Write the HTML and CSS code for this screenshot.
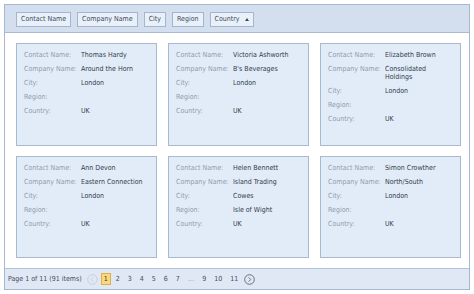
FILE: index.html
```html
<!DOCTYPE html>
<html>
<head>
<meta charset="utf-8">
<link rel="stylesheet" href="styles.css">
</head>
<body>
<div class="view">
  <div class="header">
    <span class="hbtn">Contact Name</span>
    <span class="hbtn">Company Name</span>
    <span class="hbtn">City</span>
    <span class="hbtn">Region</span>
    <span class="hbtn">Country <span class="sort"></span></span>
  </div>
  <div class="content">
    <div class="card">
      <span class="lbl">Contact Name:</span><span class="val">Thomas Hardy</span>
      <span class="lbl">Company Name:</span><span class="val">Around the Horn</span>
      <span class="lbl">City:</span><span class="val">London</span>
      <span class="lbl">Region:</span><span class="val"></span>
      <span class="lbl">Country:</span><span class="val">UK</span>
    </div>
    <div class="card">
      <span class="lbl">Contact Name:</span><span class="val">Victoria Ashworth</span>
      <span class="lbl">Company Name:</span><span class="val">B's Beverages</span>
      <span class="lbl">City:</span><span class="val">London</span>
      <span class="lbl">Region:</span><span class="val"></span>
      <span class="lbl">Country:</span><span class="val">UK</span>
    </div>
    <div class="card">
      <span class="lbl">Contact Name:</span><span class="val">Elizabeth Brown</span>
      <span class="lbl">Company Name:</span><span class="val">Consolidated Holdings</span>
      <span class="lbl">City:</span><span class="val">London</span>
      <span class="lbl">Region:</span><span class="val"></span>
      <span class="lbl">Country:</span><span class="val">UK</span>
    </div>
    <div class="card">
      <span class="lbl">Contact Name:</span><span class="val">Ann Devon</span>
      <span class="lbl">Company Name:</span><span class="val">Eastern Connection</span>
      <span class="lbl">City:</span><span class="val">London</span>
      <span class="lbl">Region:</span><span class="val"></span>
      <span class="lbl">Country:</span><span class="val">UK</span>
    </div>
    <div class="card">
      <span class="lbl">Contact Name:</span><span class="val">Helen Bennett</span>
      <span class="lbl">Company Name:</span><span class="val">Island Trading</span>
      <span class="lbl">City:</span><span class="val">Cowes</span>
      <span class="lbl">Region:</span><span class="val">Isle of Wight</span>
      <span class="lbl">Country:</span><span class="val">UK</span>
    </div>
    <div class="card">
      <span class="lbl">Contact Name:</span><span class="val">Simon Crowther</span>
      <span class="lbl">Company Name:</span><span class="val">North/South</span>
      <span class="lbl">City:</span><span class="val">London</span>
      <span class="lbl">Region:</span><span class="val"></span>
      <span class="lbl">Country:</span><span class="val">UK</span>
    </div>
  </div>
  <div class="pager">
    <span class="summary">Page 1 of 11 (91 items)</span>
    <span class="nav prev"><svg width="11" height="11" viewBox="0 0 11 11"><circle cx="5.5" cy="5.5" r="4.8" fill="none" stroke="#c4cfdc" stroke-width="0.9"/><path d="M6.3 3.4 L4.3 5.5 L6.3 7.6" fill="none" stroke="#c4cfdc" stroke-width="0.9"/></svg></span>
    <span class="pg cur">1</span>
    <span class="pg">2</span>
    <span class="pg">3</span>
    <span class="pg">4</span>
    <span class="pg">5</span>
    <span class="pg">6</span>
    <span class="pg">7</span>
    <span class="pg dots">…</span>
    <span class="pg">9</span>
    <span class="pg">10</span>
    <span class="pg">11</span>
    <span class="nav next"><svg width="11" height="11" viewBox="0 0 11 11"><circle cx="5.5" cy="5.5" r="4.8" fill="none" stroke="#56657a" stroke-width="0.9"/><path d="M4.7 3.4 L6.7 5.5 L4.7 7.6" fill="none" stroke="#56657a" stroke-width="0.9"/></svg></span>
  </div>
</div>
</body>
</html>
```

FILE: styles.css
```css
html, body {
  margin: 0;
  padding: 0;
  background: #ffffff;
}
body {
  font-family: "DejaVu Sans Condensed", "DejaVu Sans", sans-serif;
  font-stretch: condensed;
  font-size: 7px;
}
.view {
  margin: 4px 0 0 4px;
  width: 464px;
  height: 284px;
  border: 1px solid #a7b8ce;
  display: flex;
  flex-direction: column;
}
.header {
  box-sizing: border-box;
  height: 28px;
  background: #d3dfee;
  border-bottom: 1px solid #a9bbd1;
  display: flex;
  align-items: center;
  gap: 6px;
  padding: 1px 0 0 11px;
}
.hbtn {
  height: 13px;
  line-height: 13px;
  padding: 0 4px;
  background: #e9f0f9;
  border: 1px solid #a3b6ce;
  color: #3b4a5e;
  display: flex;
  align-items: center;
  gap: 5px;
}
.sort {
  width: 0;
  height: 0;
  border-left: 2px solid transparent;
  border-right: 2px solid transparent;
  border-bottom: 3px solid #3b4a5e;
}
.content {
  flex: 1;
  background: #ffffff;
  display: grid;
  grid-template-columns: 141px 141px 141px;
  grid-template-rows: 103px 102px;
  column-gap: 11px;
  row-gap: 10px;
  padding: 10px 0 0 11px;
}
.card {
  box-sizing: border-box;
  background: #e2ecf8;
  border: 1px solid #a8bacf;
  padding: 7px 6px 0 7px;
  display: grid;
  grid-template-columns: 57px 1fr;
  grid-auto-rows: min-content;
  row-gap: 6px;
  line-height: 8px;
  align-content: start;
}
.lbl {
  color: #8d9bae;
  white-space: nowrap;
}
.val {
  color: #2f3b4b;
}
.pager {
  height: 20px;
  background: #dfe8f4;
  border-top: 1px solid #b3c3d7;
  display: flex;
  align-items: center;
  padding-left: 3px;
  color: #3f4d60;
}
.summary {
  margin-right: 4px;
}
.nav {
  display: flex;
  width: 11px;
  height: 11px;
  margin: 0 2px 0 1px;
}
.nav.next {
  margin-left: 2px;
}
.pg {
  padding: 0 2px;
  text-align: center;
  height: 10px;
  line-height: 10px;
  margin: 0 1px;
  border: 1px solid transparent;
}
.pg.cur {
  background: #fbd879;
  border-color: #e3ad4a;
  color: #2f3b4b;
}
.pg.dots {
  color: #7f8ea2;
}
```
